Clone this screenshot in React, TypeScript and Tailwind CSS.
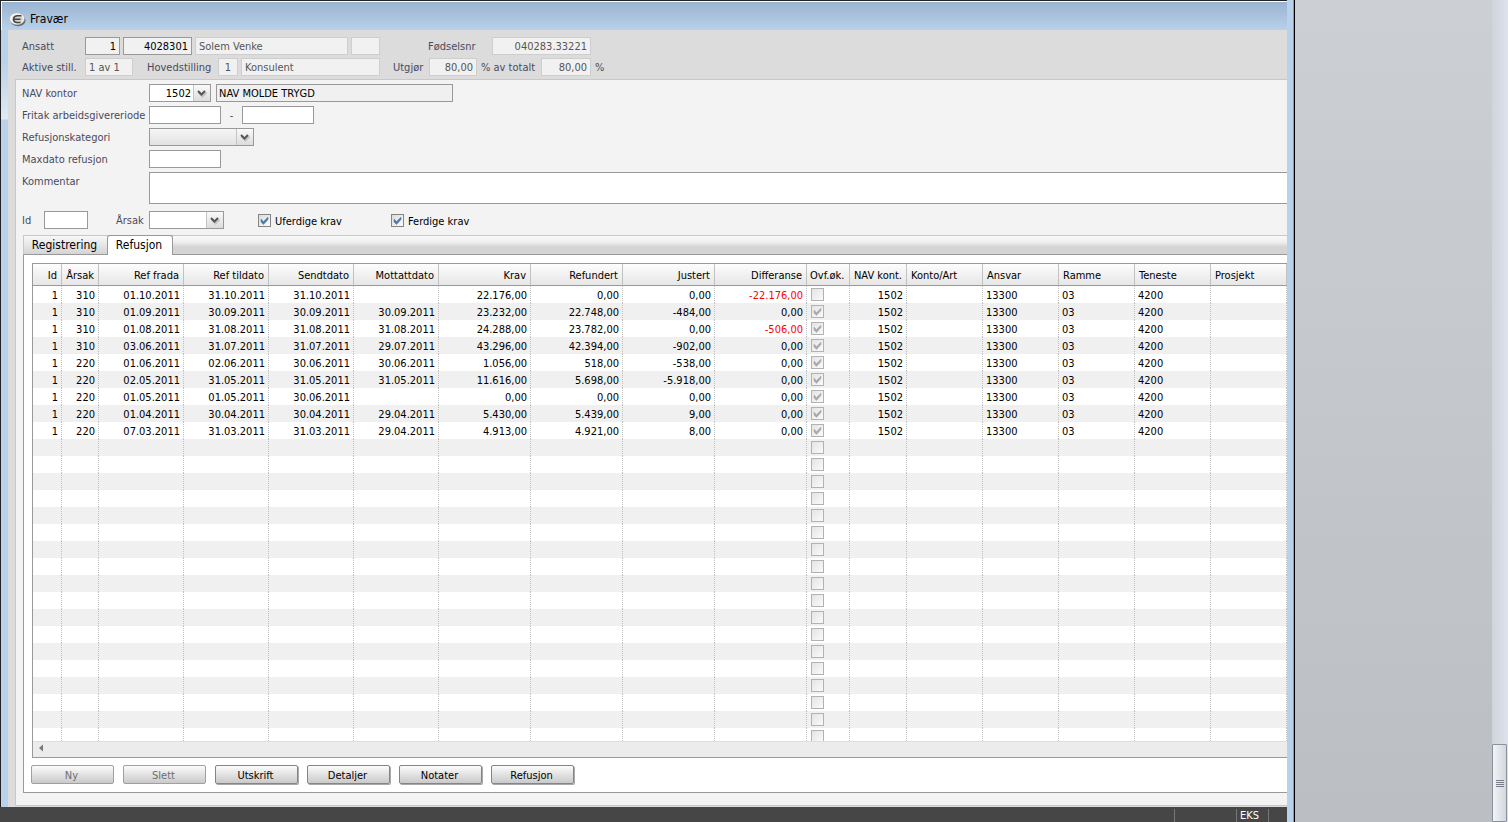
import React, { useState } from 'react';

type Align = 'left' | 'right';

interface Column {
  key: string;
  label: string;
  width: string;
  align: Align;
}

const COLUMNS: Column[] = [
  { key: 'id', label: 'Id', width: 'w-[29px]', align: 'right' },
  { key: 'arsak', label: 'Årsak', width: 'w-[37px]', align: 'right' },
  { key: 'fra', label: 'Ref frada', width: 'w-[85px]', align: 'right' },
  { key: 'til', label: 'Ref tildato', width: 'w-[85px]', align: 'right' },
  { key: 'sendt', label: 'Sendtdato', width: 'w-[85px]', align: 'right' },
  { key: 'mottatt', label: 'Mottattdato', width: 'w-[85px]', align: 'right' },
  { key: 'krav', label: 'Krav', width: 'w-[92px]', align: 'right' },
  { key: 'refundert', label: 'Refundert', width: 'w-[92px]', align: 'right' },
  { key: 'justert', label: 'Justert', width: 'w-[92px]', align: 'right' },
  { key: 'differanse', label: 'Differanse', width: 'w-[92px]', align: 'right' },
  { key: 'ovf', label: 'Ovf.øk.', width: 'w-[43px]', align: 'left' },
  { key: 'nav', label: 'NAV kont.', width: 'w-[57px]', align: 'right' },
  { key: 'konto', label: 'Konto/Art', width: 'w-[76px]', align: 'left' },
  { key: 'ansvar', label: 'Ansvar', width: 'w-[76px]', align: 'left' },
  { key: 'ramme', label: 'Ramme', width: 'w-[76px]', align: 'left' },
  { key: 'teneste', label: 'Teneste', width: 'w-[76px]', align: 'left' },
  { key: 'prosjekt', label: 'Prosjekt', width: '', align: 'left' },
];

// id, årsak, fra, til, sendt, mottatt, krav, refundert, justert, differanse, ovf.øk
const CLAIMS: [string, string, string, string, string, string, string, string, string, string, boolean][] = [
  ['1', '310', '01.10.2011', '31.10.2011', '31.10.2011', '', '22.176,00', '0,00', '0,00', '-22.176,00', false],
  ['1', '310', '01.09.2011', '30.09.2011', '30.09.2011', '30.09.2011', '23.232,00', '22.748,00', '-484,00', '0,00', true],
  ['1', '310', '01.08.2011', '31.08.2011', '31.08.2011', '31.08.2011', '24.288,00', '23.782,00', '0,00', '-506,00', true],
  ['1', '310', '03.06.2011', '31.07.2011', '31.07.2011', '29.07.2011', '43.296,00', '42.394,00', '-902,00', '0,00', true],
  ['1', '220', '01.06.2011', '02.06.2011', '30.06.2011', '30.06.2011', '1.056,00', '518,00', '-538,00', '0,00', true],
  ['1', '220', '02.05.2011', '31.05.2011', '31.05.2011', '31.05.2011', '11.616,00', '5.698,00', '-5.918,00', '0,00', true],
  ['1', '220', '01.05.2011', '01.05.2011', '30.06.2011', '', '0,00', '0,00', '0,00', '0,00', true],
  ['1', '220', '01.04.2011', '30.04.2011', '30.04.2011', '29.04.2011', '5.430,00', '5.439,00', '9,00', '0,00', true],
  ['1', '220', '07.03.2011', '31.03.2011', '31.03.2011', '29.04.2011', '4.913,00', '4.921,00', '8,00', '0,00', true],
];

const TOTAL_ROWS = 27;

const ROWS = Array.from({ length: TOTAL_ROWS }, (_, i) => {
  const c = CLAIMS[i];
  if (!c) return { cells: COLUMNS.map(() => ''), done: false };
  return {
    cells: [...(c.slice(0, 10) as string[]), '', '1502', '', '13300', '03', '4200', ''],
    done: c[10],
  };
});

const CheckMark = ({ className }: { className: string }) => (
  <svg viewBox="0 0 13 13" className={`absolute inset-0 w-[13px] h-[13px] pointer-events-none ${className}`}>
    <path d="M3 5 L5.5 7.5 L10 3 V5.5 L5.5 10.5 L3 8 Z" fill="currentColor" stroke="currentColor" strokeWidth="0.5" />
  </svg>
);

const ReadField = ({ label, value, className }: { label: string; value: string; className: string }) => (
  <input
    readOnly
    aria-label={label}
    value={value}
    className={`h-[18px] border border-[#cecece] bg-[#f1f1f1] px-[3px] text-[#555] outline-none ${className}`}
  />
);

const TextField = ({ id, label, className }: { id?: string; label?: string; className: string }) => (
  <input
    id={id}
    aria-label={label}
    type="text"
    className={`h-[18px] border border-[#999] bg-white px-[3px] text-black outline-none ${className}`}
  />
);

const DropDown = ({ id, options, className, plain }: { id: string; options: string[]; className: string; plain?: boolean }) => (
  <div className={`relative h-[18px] border border-[#999] ${plain ? 'bg-gradient-to-b from-[#f6f6f6] to-[#e2e2e2]' : 'bg-white'} ${className}`}>
    <select id={id} className="w-full h-full appearance-none bg-transparent pr-[19px] text-right [text-align-last:right] text-black outline-none">
      {options.map(o => (
        <option key={o}>{o}</option>
      ))}
    </select>
    <span className="absolute right-0 top-0 h-full w-[17px] border-l border-[#c4c4c4] bg-gradient-to-b from-[#fafafa] to-[#dcdcdc] pointer-events-none">
      <svg viewBox="0 0 16 16" className="w-[16px] h-[16px]">
        <path d="M4.5 7.5 L8.5 11.5 L12.5 7.5" fill="none" stroke="#c4c4c4" strokeWidth="2" />
        <path d="M4 6 L7.5 9.5 L11 6" fill="none" stroke="#555" strokeWidth="2" />
      </svg>
    </span>
  </div>
);

const FilterCheck = ({ label, className }: { label: string; className: string }) => {
  const [checked, setChecked] = useState(true);
  return (
    <label className={`flex items-center gap-1 text-black ${className}`}>
      <span className="relative w-[13px] h-[13px]">
        <input
          type="checkbox"
          checked={checked}
          onChange={e => setChecked(e.target.checked)}
          className="block w-[13px] h-[13px] appearance-none border border-[#858585] bg-gradient-to-br from-[#dcdcdc] to-[#fbfbfb]"
        />
        {checked && <CheckMark className="text-[#4f7ba6]" />}
      </span>
      <span className="pt-[2px]">{label}</span>
    </label>
  );
};

const ActionButton = ({ label, disabled }: { label: string; disabled?: boolean }) => (
  <button
    type="button"
    disabled={disabled}
    className={`w-[83px] h-[19px] pt-px pr-[2px] rounded-[2px] border bg-gradient-to-b from-[#fcfcfc] via-[#e2e2e2] to-[#cacaca] ${
      disabled ? 'border-[#a0a0a0] text-[#6e6e6e]' : 'border-[#858585] text-black shadow-[1px_1px_0_#a8a8a8]'
    }`}
  >
    {label}
  </button>
);

const Logo = () => (
  <svg viewBox="0 0 17 15" className="w-[17px] h-[15px]">
    <ellipse cx="9" cy="8.5" rx="7.5" ry="5.8" fill="#666" />
    <ellipse cx="8" cy="6.8" rx="7.5" ry="6" fill="#f4f4f4" stroke="#b0b0b0" strokeWidth="0.5" />
    <ellipse cx="8.5" cy="7.2" rx="5.4" ry="4.4" fill="#d4d4d4" />
    <path d="M12.5 3.8 H8 Q4.8 4.2 4.5 7.2 Q4.6 10 7.5 10.6 H11.5 M5 7.2 H11.5" fill="none" stroke="#444" strokeWidth="1.5" />
  </svg>
);

const RefundTable = () => (
  <div className="flex flex-col flex-1 min-h-0 border border-r-0 border-[#999] bg-white">
    <div className="flex-1 min-h-0 overflow-hidden">
      <table className="w-full table-fixed border-separate border-spacing-0 text-black">
        <thead>
          <tr>
            {COLUMNS.map(col => (
              <th
                key={col.key}
                className={`h-[22px] p-0 pt-[2px] border-b border-b-[#999] border-r border-r-[#c2c2c2] bg-gradient-to-b from-[#fdfdfd] to-[#e6e6e6] font-normal leading-[13px] whitespace-nowrap overflow-hidden ${col.width} ${
                  col.align === 'right' ? 'text-right pr-1' : col.key === 'ovf' ? 'text-left pl-[3px]' : 'text-left pl-1'
                }`}
              >
                {col.label}
              </th>
            ))}
          </tr>
        </thead>
        <tbody>
          {ROWS.map((row, r) => (
            <tr key={r} className="odd:bg-white even:bg-[#f0f0f0]">
              {row.cells.map((cell, c) => {
                const col = COLUMNS[c];
                return (
                  <td
                    key={col.key}
                    className={`h-[17px] p-0 border-r border-dotted border-[#c0c0c0] leading-[13px] whitespace-nowrap ${
                      col.align === 'right' ? 'text-right pt-[2px] pr-[3px]' : col.key === 'ovf' ? 'pl-1' : 'text-left pt-[2px] pl-[3px]'
                    } ${col.key === 'differanse' && cell.startsWith('-') ? 'text-[#f00]' : ''}`}
                  >
                    {col.key === 'ovf' ? (
                      <span className="relative block w-[13px] h-[13px]">
                        <input
                          type="checkbox"
                          disabled
                          checked={row.done}
                          readOnly
                          aria-label={`Ovf.øk. rad ${r + 1}`}
                          className="block w-[13px] h-[13px] appearance-none border border-[#b2b2b2] bg-gradient-to-br from-[#e4e4e4] to-[#fafafa]"
                        />
                        {row.done && <CheckMark className="text-[#aaa]" />}
                      </span>
                    ) : (
                      cell
                    )}
                  </td>
                );
              })}
            </tr>
          ))}
        </tbody>
      </table>
    </div>
    {/* horizontal scroll */}
    <div className="h-4 shrink-0 flex items-center pl-[5px] pb-[3px] border-t border-[#dedede] bg-[#ececec]">
      <svg viewBox="0 0 6 8" className="w-[6px] h-[8px]">
        <path d="M5 0.5 V7.5 L1 4 Z" fill="#777" />
      </svg>
    </div>
  </div>
);

export default function App() {
  const [tab, setTab] = useState('Refusjon');

  return (
    <div className="flex h-screen overflow-hidden text-[11px] leading-[13px] text-[#4a4a5c] font-['DejaVu_Sans_Condensed','Noto_Sans',sans-serif]">
      <div className="flex flex-col flex-1 min-w-0">
        {/* window */}
        <div className="flex flex-col flex-1 min-h-0 border-l border-t border-[#222] bg-[linear-gradient(#b9d1ea_0px,#b9d1ea_60px,#dfeaf5_118px,#b9d1ea_119px)]">
          <header className="h-[29px] shrink-0 flex items-center gap-1 pl-[7px] pt-[6px] border-t border-l border-white bg-gradient-to-b from-[#99b4d1] to-[#b9d1ea] text-[12px] text-black">
            <Logo />
            <h1>Fravær</h1>
          </header>

          <div className="flex flex-col flex-1 min-h-0 ml-[7px] pl-[7px] pb-px bg-[#dcdcdc]">
            <section className="shrink-0 pl-[7px] pt-[7px] pb-[3px] flex flex-col gap-[3px]">
              <div className="flex items-center">
                <span className="w-[63px]">Ansatt</span>
                <input readOnly aria-label="Firma" value="1" className="w-[35px] h-[18px] mr-[3px] px-[3px] text-right text-black border border-[#999] bg-[#f1f1f1]" />
                <input readOnly aria-label="Ansattnr" value="4028301" className="w-[69px] h-[18px] mr-[3px] px-[3px] text-right text-black border border-[#999] bg-[#f1f1f1]" />
                <ReadField label="Navn" value="Solem Venke" className="w-[153px] mr-[3px]" />
                <ReadField label="Status" value="" className="w-[29px]" />
                <span className="ml-12 w-[64px]">Fødselsnr</span>
                <ReadField label="Fødselsnr" value="040283.33221" className="w-[99px] text-right" />
              </div>
              <div className="flex items-center">
                <span className="w-[63px]">Aktive still.</span>
                <ReadField label="Aktive stillinger" value="1 av 1" className="w-[48px]" />
                <span className="ml-[14px] w-[71px]">Hovedstilling</span>
                <ReadField label="Hovedstilling nr" value="1" className="w-5 mr-[3px] text-center" />
                <ReadField label="Hovedstilling" value="Konsulent" className="w-[139px]" />
                <span className="ml-[13px] w-[36px]">Utgjør</span>
                <ReadField label="Utgjør" value="80,00" className="w-12 text-right" />
                <span className="ml-1 w-[60px] whitespace-nowrap">% av totalt</span>
                <ReadField label="Av totalt" value="80,00" className="w-[50px] text-right" />
                <span className="ml-1">%</span>
              </div>
            </section>

            <main className="flex flex-col flex-1 min-h-0 border border-r-0 border-[#c8c8c8] bg-[#f3f3f3] pt-1 pb-3">
              <div className="shrink-0 pl-[6px] flex flex-col gap-1">
                <div className="flex items-center">
                  <label htmlFor="nav" className="w-[127px]">NAV kontor</label>
                  <DropDown id="nav" options={['1502']} className="w-[62px]" />
                  <input readOnly aria-label="NAV kontor navn" value="NAV MOLDE TRYGD" className="ml-[5px] w-[237px] h-[18px] px-[2px] border border-[#999] bg-[#f0f0f0] text-black" />
                </div>
                <div className="flex items-center">
                  <label htmlFor="fritak" className="w-[127px] whitespace-nowrap">Fritak arbeidsgivereriode</label>
                  <TextField id="fritak" className="w-[72px]" />
                  <span className="w-[21px] text-center">-</span>
                  <TextField label="Fritak til" className="w-[72px]" />
                </div>
                <div className="flex items-center">
                  <label htmlFor="kategori" className="w-[127px]">Refusjonskategori</label>
                  <DropDown id="kategori" options={['']} className="w-[105px]" plain />
                </div>
                <div className="flex items-center">
                  <label htmlFor="maxdato" className="w-[127px]">Maxdato refusjon</label>
                  <TextField id="maxdato" className="w-[72px]" />
                </div>
                <div className="flex">
                  <label htmlFor="kommentar" className="w-[127px] pt-[3px]">Kommentar</label>
                  <textarea id="kommentar" className="block flex-1 h-8 resize-none border border-r-0 border-[#999] bg-white outline-none" />
                </div>
                <div className="flex items-center mt-[3px]">
                  <label htmlFor="id" className="w-[22px]">Id</label>
                  <TextField id="id" className="w-[44px]" />
                  <label htmlFor="arsak" className="ml-7 w-[33px]">Årsak</label>
                  <DropDown id="arsak" options={['']} className="w-[75px]" />
                  <FilterCheck label="Uferdige krav" className="ml-[34px] w-[133px]" />
                  <FilterCheck label="Ferdige krav" className="" />
                </div>
              </div>

              {/* tabs */}
              <div className="shrink-0 ml-[7px] mt-[6px] h-5 flex border-t border-l border-[#c8c8c8] border-b border-b-[#999] bg-[linear-gradient(#fafafa_0px,#efefef_6px,#d4d4d4_11px,#d4d4d4_18px)] text-[12px] text-black">
                {['Registrering', 'Refusjon'].map(name => (
                  <button
                    key={name}
                    type="button"
                    onClick={() => setTab(name)}
                    className={
                      tab === name
                        ? 'w-[66px] h-5 -mt-px pr-[2px] rounded-t-[3px] border border-b-0 border-[#999] bg-white'
                        : 'w-[83px] h-[18px] pr-[2px] bg-gradient-to-b from-[#f8f8f8] to-[#d4d4d4]'
                    }
                  >
                    {name}
                  </button>
                ))}
              </div>

              <div className="flex flex-col flex-1 min-h-0 ml-[7px] pl-2 pt-2 border-l border-b border-[#999] bg-white">
                <RefundTable />
                <div className="shrink-0 flex gap-[9px] -ml-px pt-[7px] pb-2">
                  <ActionButton label="Ny" disabled />
                  <ActionButton label="Slett" disabled />
                  <ActionButton label="Utskrift" />
                  <ActionButton label="Detaljer" />
                  <ActionButton label="Notater" />
                  <ActionButton label="Refusjon" />
                </div>
              </div>
            </main>
          </div>
        </div>

        <footer className="h-[15px] shrink-0 flex justify-end pt-[2px] overflow-hidden bg-[#464646] text-white">
          <span className="w-[62px] border-l border-[#777]" />
          <span className="w-8 pl-[3px] border-l border-[#777]">EKS</span>
          <span className="w-[19px] border-l border-[#777]" />
        </footer>
      </div>

      {/* window edge and desktop */}
      <div className="w-2 shrink-0 border-r border-black bg-[#b9d1ea]">
        <div className="h-full border-r border-[#3fb8d8]" />
      </div>
      <aside className="w-[197px] shrink-0 bg-gradient-to-b from-[#cccfd4] to-[#bbbec3]" />
      <div className="w-4 shrink-0 flex flex-col justify-end bg-gradient-to-r from-[#d0d4da] to-[#dde2ec]">
        <div className="h-[78px] w-[15px] flex flex-col items-center justify-center gap-px border border-[#8b9099] rounded-[1px] bg-gradient-to-r from-[#f2f4f7] to-[#d3d7dd]">
          <i className="w-2 h-px bg-[#777c88]" />
          <i className="w-2 h-px bg-[#777c88]" />
          <i className="w-2 h-px bg-[#777c88]" />
          <i className="w-2 h-px bg-[#777c88]" />
        </div>
      </div>
    </div>
  );
}
